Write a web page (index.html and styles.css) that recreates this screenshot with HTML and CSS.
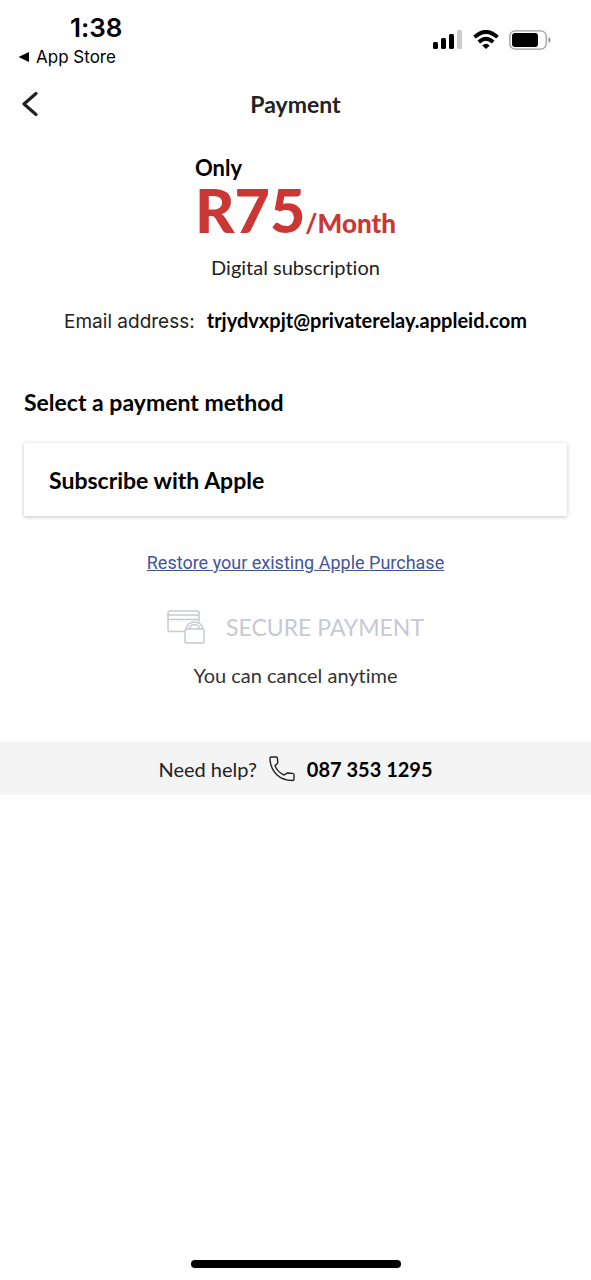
FILE: index.html
```html
<!DOCTYPE html>
<html lang="en">
<head>
<meta charset="utf-8">
<meta name="viewport" content="width=device-width, initial-scale=1">
<title>Payment</title>
<link rel="stylesheet" href="styles.css">
</head>
<body>
<div class="screen">
  <div class="status">
    <div class="status-left">
      <time class="clock">1:38</time>
      <a class="return" href="#">
        <svg width="12" height="12" viewBox="0 0 12 12" aria-hidden="true"><path d="M0.5 6L11 1V11Z" fill="#000"/></svg>
        App Store
      </a>
    </div>
    <div class="status-icons">
      <svg width="30" height="20" viewBox="0 0 30 20" aria-hidden="true"><rect x="0" y="12" width="5" height="7" rx="1.5"/><rect x="8" y="8" width="5" height="11" rx="1.5"/><rect x="16" y="4" width="5" height="15" rx="1.5"/><rect x="24" y="0" width="5" height="19" rx="1.5" fill="#ccc"/></svg>
      <svg width="26" height="20" viewBox="0 0 26 20" aria-hidden="true"><g fill="none" stroke="#000" stroke-width="3.8"><path d="M1.500 7.200Q13 -3.400 24.500 7.200"/><path d="M5.800 12Q13 5.300 20.200 12"/></g><path d="M13 19L9.300 15.400Q13 12.200 16.700 15.400Z"/></svg>
      <svg width="42" height="20" viewBox="0 0 42 20" aria-hidden="true"><rect x="0.800" y="0.800" width="36.400" height="18.400" rx="5.500" fill="none" stroke="#999" stroke-width="1.300"/><rect x="3" y="3" width="26" height="14" rx="3"/><path d="M39.500 7Q41.500 8 41.500 10T39.500 13Z" fill="#888"/></svg>
    </div>
  </div>
  <header class="topbar">
    <button class="back" type="button" aria-label="Back"><svg width="16" height="26" viewBox="0 0 16 26" aria-hidden="true"><path d="M14 2.500L2 13L14 23.500" fill="none" stroke="#222" stroke-width="3.200" stroke-linecap="round" stroke-linejoin="round"/></svg></button>
    <h1 class="title">Payment</h1>
  </header>
  <main>
    <div class="price">
      <span class="only">Only</span>
      <div class="amount">R75<span class="period">/Month</span></div>
    </div>
    <p class="plan">Digital subscription</p>
    <p class="email"><span>Email address:</span><strong class="address">trjydvxpjt@privaterelay.appleid.com</strong></p>
    <h2 class="method-title">Select a payment method</h2>
    <button class="method" type="button">Subscribe with Apple</button>
    <a class="restore" href="#">Restore your existing Apple Purchase</a>
    <div class="secure">
      <svg width="38" height="34" viewBox="0 0 38 34" fill="none" stroke="#c7c9d3" stroke-width="1.500" aria-hidden="true"><path d="M18 21.500H3Q1 21.500 1 19.500V3Q1 1 3 1H30Q32 1 32 3V12M1 5H32M1 9.500H32"/><rect x="18" y="19" width="19" height="14" rx="1.500"/><path d="M19.500 19V18.500A8 6.500 0 0 1 35.500 18.500V19M22.500 19A5 4.500 0 0 1 32.500 19"/></svg>
      <span>SECURE PAYMENT</span>
    </div>
    <p class="cancel">You can cancel anytime</p>
  </main>
  <footer class="help">
    <span>Need help?</span>
    <svg width="26" height="26" viewBox="0 0 26 26" fill="none" stroke="#222" stroke-width="1.400" stroke-linejoin="round" aria-hidden="true"><path d="M2 1H7Q8.500 1 8.500 2.500L8.700 6.500Q8.700 7.500 7.700 8.200L6 9.600Q8 15.500 15 19L17.500 17.300Q18 17 18.800 17L23.500 17.400Q25 17.600 25 19V23Q25 24.500 23.500 24.500Q14 24.600 7.500 18.500Q1 11.500 1 2.500Q1 1 2 1Z"/></svg>
    <a class="phone" href="tel:0873531295">087 353 1295</a>
  </footer>
  <div class="home"></div>
</div>
</body>
</html>
```
FILE: styles.css
```css
* { box-sizing: border-box; }
body { margin: 0; background: #fff; color: #000; font-family: Lato, "Liberation Sans", sans-serif; font-size: 20px; line-height: 24px; font-variant-ligatures: none; }
h1, h2, p { margin: 0; }
button { border: 0; background: none; padding: 0; font: inherit; color: inherit; }
a { color: inherit; text-decoration: none; }
svg { display: block; }
.screen { min-height: 100vh; display: flex; flex-direction: column; }
.status { display: flex; justify-content: space-between; padding: 14px 40px 0 18px; font-family: Inter, sans-serif; }
.status-left { display: flex; flex-direction: column; gap: 3px; }
.clock { padding-left: 52px; font-size: 26px; font-weight: 600; line-height: 28px; }
.return { display: flex; align-items: center; gap: 6px; font-size: 17px; }
.status-icons { display: flex; gap: 10px; padding-top: 16px; }
.topbar { display: grid; grid-template-columns: 1fr auto 1fr; align-items: center; padding: 0 22px; margin-top: 17px; height: 36px; }
.back { justify-self: start; }
.title { font-size: 23px; line-height: 28px; font-weight: 700; color: #222; }
main { display: flex; flex-direction: column; align-items: center; padding: 0 24px; }
.price { margin-top: 33px; font-weight: 700; }
.only { display: block; font-size: 22px; line-height: 26px; }
.amount { color: #cb3735; font-size: 61px; line-height: 58px; font-weight: 900; }
.period { font-size: 26px; font-weight: 900; line-height: 26px; }
.plan { margin-top: 16px; color: #222; }
.email { display: flex; align-items: baseline; gap: 12px; margin-top: 29px; }
.email span { font-family: Inter, sans-serif; font-size: 19px; color: #222; }
.method-title { align-self: stretch; margin-top: 54px; font-size: 23px; line-height: 28px; font-weight: 700; }
.method { align-self: stretch; margin-top: 27px; height: 73px; padding: 0 25px; text-align: left; font-size: 23px; font-weight: 700; background: #fff; box-shadow: 0 1px 4px rgba(0, 0, 0, .24); }
.restore { margin-top: 35px; font-family: Roboto, sans-serif; font-size: 18px; color: #44549a; text-decoration: underline; }
.secure { display: flex; align-items: center; gap: 21px; margin-top: 35px; font-size: 23px; color: #c7c9d3; }
.cancel { margin-top: 19px; color: #333; }
.help { display: flex; justify-content: center; align-items: center; gap: 12px; height: 53px; margin-top: 55px; background: #f4f4f4; color: #222; }
.phone { color: #000; font-weight: 700; }
.home { width: 210px; height: 8px; margin: auto auto 12px; border-radius: 4px; background: #000; }
```
